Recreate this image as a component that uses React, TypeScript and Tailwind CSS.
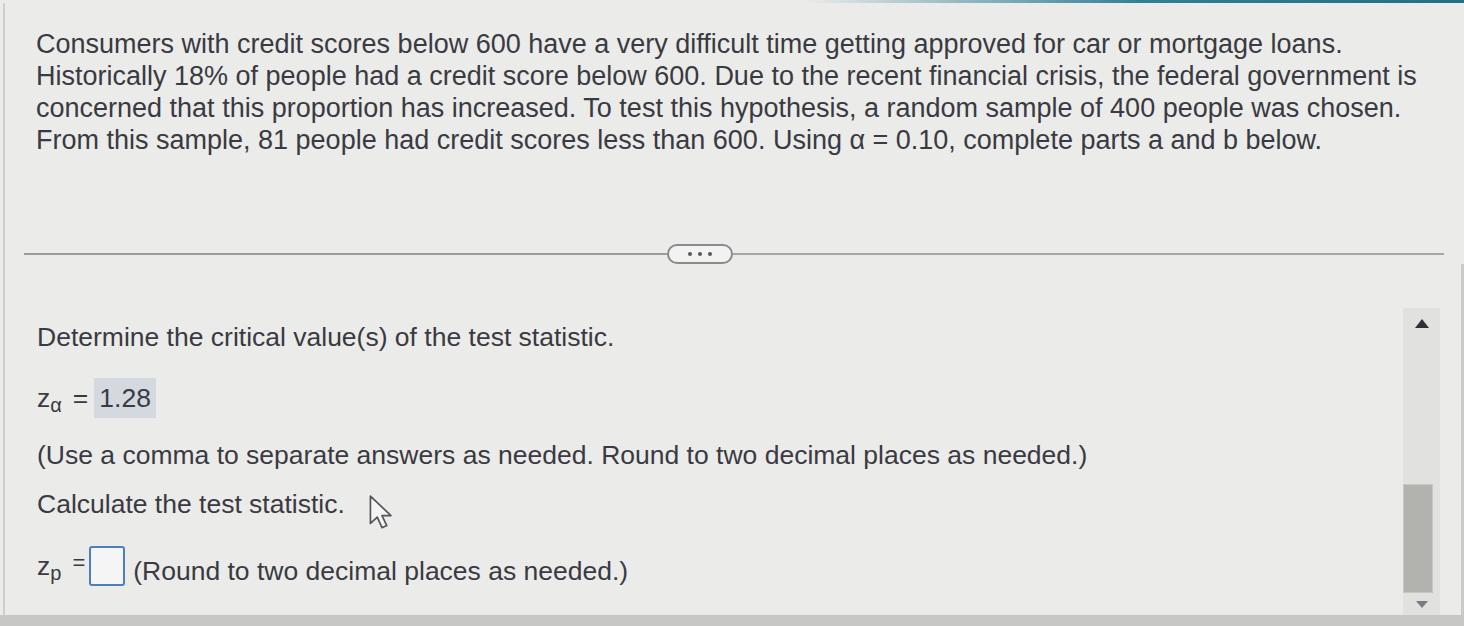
import React from 'react';

const FONT = { fontFamily: '"Liberation Sans", Arial, sans-serif' };

function Scrollbar() {
    return (
        <div className="flex w-[37px] flex-1 flex-col bg-[#e1e1df]">
            <div className="flex h-[30px] items-center justify-center">
                <svg width="14" height="9" viewBox="0 0 14 9">
                    <path d="M7 0 L14 9 L0 9 Z" fill="#2f3138" />
                </svg>
            </div>
            <div className="flex-1" />
            <div className="mr-[7px] h-[109px] border border-[#c8c8c4] bg-[#b2b2ae]" />
            <div className="flex h-[22px] items-center justify-center">
                <svg width="12" height="7" viewBox="0 0 12 7">
                    <path d="M0 0 L12 0 L6 7 Z" fill="#7a7b80" />
                </svg>
            </div>
        </div>
    );
}

function Cursor() {
    return (
        <svg
            className="absolute left-[368px] top-[494px]"
            width="28"
            height="40"
            viewBox="0 0 26 38"
        >
            <path
                d="M2 2 L2 28 L8.5 22 L13 32 L17.5 30 L13 20.5 L21.5 20.5 Z"
                fill="#f4f4f2"
                stroke="#55565c"
                strokeWidth="1.6"
                strokeLinejoin="round"
            />
        </svg>
    );
}

export default function App(): JSX.Element {
    return (
        <div
            className="relative flex h-[626px] w-full flex-col overflow-hidden bg-[#ebebe9] text-[#3a3a42]"
            style={FONT}
        >
            {/* top accent bar */}
            <div className="h-[3px] w-full bg-[linear-gradient(to_right,transparent_55%,#2f7f95_78%,#246f86)]" />

            <div className="ml-[3px] flex flex-1 flex-col border-l-2 border-[#cfcfcd]">
                {/* question text */}
                <div className="pl-[31px] pt-[25px] text-[27px] leading-[32px]">
                    <p className="whitespace-nowrap">
                        Consumers with credit scores below 600 have a very difficult time getting approved for car or mortgage loans.
                    </p>
                    <p className="whitespace-nowrap">
                        Historically 18% of people had a credit score below 600. Due to the recent financial crisis, the federal government is
                    </p>
                    <p className="whitespace-nowrap">
                        concerned that this proportion has increased. To test this hypothesis, a random sample of 400 people was chosen.
                    </p>
                    <p className="whitespace-nowrap">
                        From this sample, 81 people had credit scores less than 600. Using α = 0.10, complete parts a and b below.
                    </p>
                </div>

                {/* divider with expand button */}
                <div className="ml-[19px] mr-[20px] mt-[88px] flex h-[20px] items-center">
                    <div className="h-[2px] w-[643px] bg-[#9c9c9c]" />
                    <div className="flex h-[20px] w-[66px] items-center justify-center gap-[6px] rounded-full border-2 border-[#8a8a8e] bg-[#f2f2f0]">
                        <span className="h-[4px] w-[4px] rounded-full bg-[#55565c]" />
                        <span className="h-[4px] w-[4px] rounded-full bg-[#55565c]" />
                        <span className="h-[4px] w-[4px] rounded-full bg-[#55565c]" />
                    </div>
                    <div className="h-[2px] flex-1 bg-[#a6a6a6]" />
                </div>

                {/* answer area */}
                <div className="flex flex-1">
                    <div className="flex-1 pl-[32px] text-[26.5px] leading-[32px]">
                        <p className="mt-[57px]">
                            Determine the critical value(s) of the test statistic.
                        </p>

                        <div className="mt-[25px] flex h-[40px] items-center">
                            <span>
                                z<sub className="text-[20px]">α</sub>
                            </span>
                            <span className="ml-[11px]">=</span>
                            <span className="ml-[6px] flex h-[40px] items-center bg-[#d3d9de] px-[5px]">
                                1.28
                            </span>
                        </div>

                        <p className="mt-[21px]">
                            (Use a comma to separate answers as needed. Round to two decimal places as needed.)
                        </p>

                        <p className="mt-[17px]">Calculate the test statistic.</p>

                        <div className="mt-[26px] flex h-[40px] items-center">
                            <span>
                                z<sub className="text-[20px]">p</sub>
                            </span>
                            <span className="ml-[11px] -mt-[6px] text-[22px]">=</span>
                            <span className="ml-[4px] h-[40px] w-[36px] rounded-[3px] border-2 border-[#4a7fc2] bg-[#f4f5f4]" />
                            <span className="ml-[8px] mt-[10px]">
                                (Round to two decimal places as needed.)
                            </span>
                        </div>
                    </div>

                    <div className="mr-[21px] flex flex-col pt-[44px]">
                        <Scrollbar />
                    </div>
                    <div className="w-[3px] bg-[#cacac8]" />
                </div>
            </div>

            {/* bottom frame strip */}
            <div className="h-[11px] w-full bg-[#c7c7c5]" />

            <Cursor />
        </div>
    );
}
